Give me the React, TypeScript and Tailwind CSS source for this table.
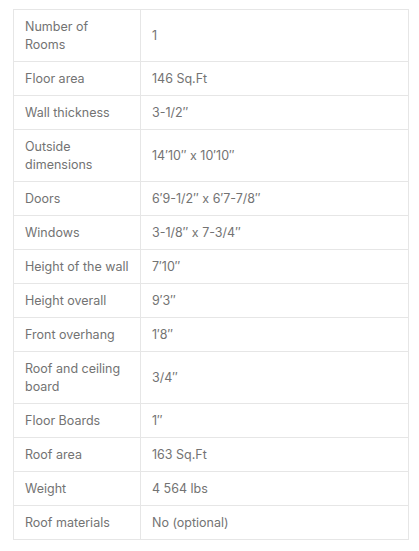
const specs: [string, string][] = [
  ["Number of Rooms", "1"],
  ["Floor area", "146 Sq.Ft"],
  ["Wall thickness", "3-1/2″"],
  ["Outside dimensions", "14′10″ x 10′10″"],
  ["Doors", "6′9-1/2″ x 6′7-7/8″"],
  ["Windows", "3-1/8″ x 7-3/4″"],
  ["Height of the wall", "7′10″"],
  ["Height overall", "9′3″"],
  ["Front overhang", "1′8″"],
  ["Roof and ceiling board", "3/4″"],
  ["Floor Boards", "1″"],
  ["Roof area", "163 Sq.Ft"],
  ["Weight", "4 564 lbs"],
  ["Roof materials", "No (optional)"],
];

export default function App() {
  return (
    <div className="min-h-[551px] bg-white pl-[13px] pt-[9px] font-['Inter',sans-serif]">
      <table className="w-[396px] table-fixed border-collapse text-[12.5px] leading-[18px] text-[#737373]">
        <colgroup>
          <col className="w-[127px]" />
          <col />
        </colgroup>
        <tbody>
          {specs.map(([label, value]) => (
            <tr key={label}>
              <td className="border border-[#e6e6e6] px-[11px] py-[7.5px] align-middle">{label}</td>
              <td className="border border-[#e6e6e6] px-[11px] py-[7.5px] align-middle">{value}</td>
            </tr>
          ))}
        </tbody>
      </table>
    </div>
  );
}
